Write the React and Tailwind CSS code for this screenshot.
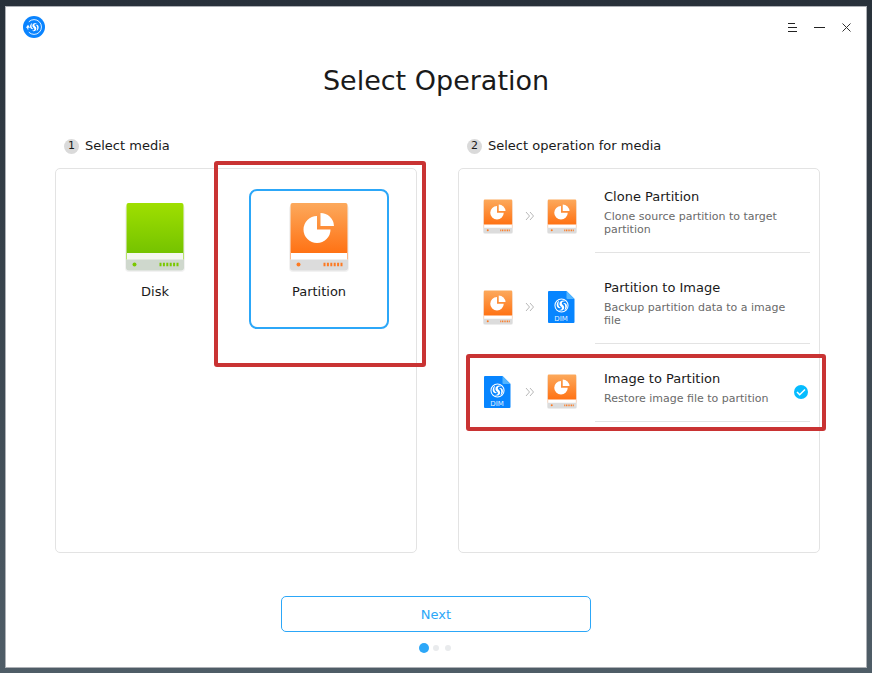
import { useId, useState } from "react";

function Vortex() {
  return (
    <g fill="#fff">
      <path d="M12.600 3.500C9.600 1.700 5.400 3.300 5.800 6.600c.3 2.300 2.800 2.500 2.600 4.400-.1 1.200-1.600 1.900-3.400 1.700 2.700 1.500 6 .2 5.900-2.700-.1-2.300-2.700-2.700-2.600-4.400.1-1.500 1.900-2.400 4.300-2.100z" />
      <path d="M5.600 3C2.600 4.300 1.900 8.600 4.300 10.300c1.100.8 2.500.6 3.100-.3C5 10.300 3.700 6.300 5.600 3z" />
      <path d="M9.600 5.600c2.300.2 3.300 3.600 1.500 7.500 3-1.500 3.500-5.800 1.600-7.300-.9-.7-2.300-.8-3.100-.2z" />
    </g>
  );
}

function Logo() {
  return (
    <svg viewBox="0 0 22 22" className="size-[22px]" role="img" aria-label="Deepin Clone">
      <circle cx="11" cy="11" r="11" fill="#0a84ff" />
      <g fill="none" stroke="#fff">
        <path d="M5.800 5.800A7.400 7.400 0 1 1 5.800 16.200" strokeWidth="1" opacity=".85" />
        <path d="M5 13.500a7 7 0 0 1-.3-3.500" strokeWidth="1" />
      </g>
      <path d="M2.800 11.800 5 8.800l2 3z" fill="#fff" />
      <svg x="6" y="5.500" width="11" height="11" viewBox="1.500 1 14 14">
        <Vortex />
      </svg>
    </svg>
  );
}

function Drive({ className, kind = "partition" }) {
  const id = useId();
  const green = kind === "disk";
  const accent = green ? "#7ac800" : "#fd7a22";
  return (
    <svg viewBox="0 0 60 70" className={className} aria-hidden="true">
      <defs>
        <linearGradient id={id} x1="0" y1="0" x2="0" y2="1">
          <stop offset="0" stopColor={green ? "#9fdf00" : "#fca95c"} />
          <stop offset="1" stopColor={green ? "#75c300" : "#ff7214"} />
        </linearGradient>
      </defs>
      <rect x="0" y="3" width="60" height="67" rx="4" fill="#000" opacity=".05" />
      <rect x="1" y="50" width="58" height="18.500" rx="3" fill={green ? "#cfd8cd" : "#dcdcdc"} />
      <rect x="1" y="50" width="58" height="7.500" fill={green ? "#f4f7f1" : "#fff"} />
      <path d="M1.500 3a2 2 0 0 1 2-2h53a2 2 0 0 1 2 2v48h-57z" fill={`url(#${id})`} />
      <path d="M1.500 51v6.500M58.500 51v6.500" stroke={green ? "#b5e36c" : "#fdb98a"} />
      {!green && (
        <g fill="#fff">
          <path d="M28 14a13.500 13.500 0 1 0 13.500 13.500H28z" />
          <path d="M31.500 11v13H45a13.500 13.500 0 0 0-13.500-13z" />
        </g>
      )}
      <circle cx="9.500" cy="62.500" r="2" fill={accent} />
      <path d="M34.500 62.500h20" stroke={accent} strokeWidth="3.500" strokeDasharray="2 1.400" />
    </svg>
  );
}

function DimFile() {
  return (
    <svg viewBox="0 0 30 34" className="h-[34px] w-[30px]" aria-hidden="true">
      <path d="M2 1h17.500l8 8v23a1 1 0 0 1-1 1H2a1 1 0 0 1-1-1V2a1 1 0 0 1 1-1z" fill="#0785ff" />
      <path d="M19.500 1l8 8h-7a1 1 0 0 1-1-1z" fill="#53b5ff" />
      <svg x="7" y="8" width="15" height="15" viewBox="0 0 16 16">
        <circle cx="8" cy="8" r="7" fill="none" stroke="#fff" strokeWidth="1.100" />
        <Vortex />
      </svg>
      <text x="14" y="31" textAnchor="middle" fontSize="7" fill="#e4f2ff">
        DIM
      </text>
    </svg>
  );
}

function Chevrons() {
  return (
    <svg viewBox="0 0 10 10" className="size-[10px]" fill="none" stroke="#b8b8b8" aria-hidden="true">
      <path d="M1 1l3.500 4L1 9M5 1l3.500 4L5 9" />
    </svg>
  );
}

function Marker({ className }) {
  return (
    <span className={`pointer-events-none absolute z-10 rounded-[3px] border-4 border-[#c93333] ${className}`} />
  );
}

function StepLabel({ number, children }) {
  return (
    <h2 className="flex items-center gap-1.5 pl-[9px] text-[13px] leading-4">
      <span className="flex size-[15px] items-center justify-center rounded-full bg-[#dadada] text-[11px]">{number}</span>
      {children}
    </h2>
  );
}

function MediaTile({ kind, label, selected, marked, onSelect }) {
  return (
    <button
      type="button"
      aria-pressed={selected}
      onClick={onSelect}
      className={`relative flex size-[140px] flex-col items-center rounded-lg border-2 pt-[11px] ${selected ? "border-[#2ca7f8]" : "border-transparent"}`}
    >
      <Drive kind={kind} className="h-[70px] w-[60px]" />
      <span className="mt-3 text-[13px] leading-4">{label}</span>
      {marked && <Marker className="-top-[30px] -right-[39px] -bottom-10 -left-[37px]" />}
    </button>
  );
}

function OperationIcon({ kind }) {
  return kind === "image" ? <DimFile /> : <Drive className="h-[35px] w-[30px]" />;
}

function OperationRow({ operation, selected, marked, onSelect }) {
  return (
    <button type="button" aria-pressed={selected} onClick={onSelect} className="relative flex w-full items-center text-left">
      <span className="flex items-center gap-3 pr-[18px] pb-2.5">
        <OperationIcon kind={operation.from} />
        <Chevrons />
        <OperationIcon kind={operation.to} />
      </span>
      <span className="flex flex-1 items-center border-b border-[#e3e3e3] pl-[9px]">
        <span className="flex flex-1 flex-col gap-[5px] pb-4">
          <span className="text-[13px] leading-4">{operation.title}</span>
          <span className="text-[11px] leading-[13px] text-[#6a6a6a]">{operation.text}</span>
        </span>
        <span className="w-4 pb-2">
          {selected && (
            <svg viewBox="0 0 14 14" className="size-[14px]" aria-hidden="true">
              <circle cx="7" cy="7" r="7" fill="#05bcff" />
              <path d="M3 7l2.700 2.800L11 4.500" fill="none" stroke="#fff" strokeWidth="1.500" />
            </svg>
          )}
        </span>
      </span>
      {marked && <Marker className="-top-[17px] -right-4 -bottom-[9px] -left-[17px]" />}
    </button>
  );
}

const operations = [
  { id: "clone", from: "drive", to: "drive", title: "Clone Partition", text: "Clone source partition to target partition" },
  { id: "backup", from: "drive", to: "image", title: "Partition to Image", text: "Backup partition data to a image file" },
  { id: "restore", from: "image", to: "drive", title: "Image to Partition", text: "Restore image file to partition" },
];

export default function App() {
  const [media, setMedia] = useState("partition");
  const [operation, setOperation] = useState("restore");

  return (
    <div className="flex min-h-screen flex-col bg-linear-to-b from-[#28313a] to-[#4f5d67] px-[5px] pt-[6px] pb-[5px] font-['DejaVu_Sans',sans-serif] text-[#1a1a1a]">
      <main className="flex flex-1 flex-col border border-[#aeb1b6] bg-white">
        <header className="flex h-10 items-center justify-between pr-[13px] pl-[17px]">
          <Logo />
          <div className="flex items-center gap-[15px]">
            <button type="button" aria-label="Menu">
              <svg viewBox="0 0 12 12" className="size-3" stroke="#222" fill="none">
                <path d="M1 2.500h7M1 6.500h9M1 10.500h9" />
              </svg>
            </button>
            <button type="button" aria-label="Minimize">
              <svg viewBox="0 0 12 12" className="size-3" stroke="#222" fill="none">
                <path d="M0 6.500h11" />
              </svg>
            </button>
            <button type="button" aria-label="Close">
              <svg viewBox="0 0 12 12" className="size-3" stroke="#333" fill="none">
                <path d="M1.500 2.500l8 8M9.500 2.500l-8 8" />
              </svg>
            </button>
          </div>
        </header>

        <h1 className="mt-[18px] text-center text-[27px] leading-8">Select Operation</h1>

        <div className="mt-[41px] grid flex-1 grid-cols-2 gap-x-[41px] pr-[46px] pl-[49px]">
          <section className="flex flex-col gap-[14px]">
            <StepLabel number="1">Select media</StepLabel>
            <div className="flex flex-1 items-start justify-center gap-6 rounded-[5px] border border-[#e3e3e3] pt-5 pl-0.5">
              <MediaTile kind="disk" label="Disk" selected={media === "disk"} onSelect={() => setMedia("disk")} />
              <MediaTile
                kind="partition"
                label="Partition"
                marked
                selected={media === "partition"}
                onSelect={() => setMedia("partition")}
              />
            </div>
          </section>

          <section className="flex flex-col gap-[14px]">
            <StepLabel number="2">Select operation for media</StepLabel>
            <div className="flex flex-1 flex-col gap-[27px] rounded-[5px] border border-[#e3e3e3] pt-5 pr-[9px] pl-6">
              {operations.map((item) => (
                <OperationRow
                  key={item.id}
                  operation={item}
                  marked={item.id === "restore"}
                  selected={operation === item.id}
                  onSelect={() => setOperation(item.id)}
                />
              ))}
            </div>
          </section>
        </div>

        <footer className="mt-[43px] flex flex-col items-center pb-[14px]">
          <button
            type="button"
            className="h-9 w-[310px] rounded-[5px] border border-[#2ca7f8] pt-0.5 text-[13px] text-[#2ca7f8]"
          >
            Next
          </button>
          <div className="mt-[11px] flex items-center gap-1.5 pr-0.5">
            <span className="-mr-0.5 size-[10px] rounded-full bg-[#2ca7f8]" />
            <span className="size-1.5 rounded-full bg-[#e9ebed]" />
            <span className="size-1.5 rounded-full bg-[#e9ebed]" />
          </div>
        </footer>
      </main>
    </div>
  );
}
